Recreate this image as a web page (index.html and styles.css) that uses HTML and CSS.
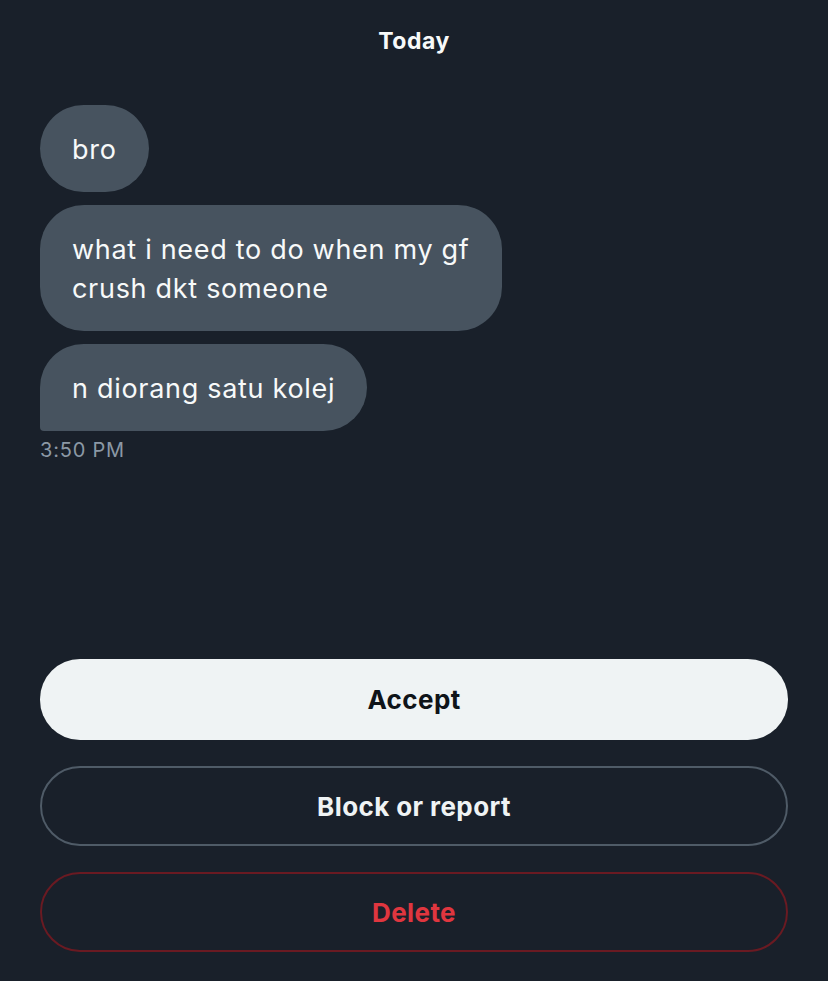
FILE: index.html
```html
<!DOCTYPE html>
<html lang="en">
<head>
<meta charset="utf-8">
<title>Message request</title>
<link rel="stylesheet" href="styles.css">
</head>
<body>
<main class="screen">
  <div class="day">Today</div>
  <section class="thread">
    <div class="bubble">bro</div>
    <div class="bubble">what i need to do when my gf<br>crush dkt someone</div>
    <div class="bubble last">n diorang satu kolej</div>
    <div class="time">3:50 PM</div>
  </section>
  <section class="actions">
    <button class="btn accept">Accept</button>
    <button class="btn block">Block or report</button>
    <button class="btn delete">Delete</button>
  </section>
</main>
</body>
</html>
```
FILE: styles.css
```css
* { box-sizing: border-box; }
html, body {
  margin: 0;
  padding: 0;
  background: #19202a;
  height: 100%;
}
body {
  font-family: Inter, Roboto, "Noto Sans", sans-serif;
  color: #f7f9f9;
}
.screen {
  height: 981px;
  display: flex;
  flex-direction: column;
  padding: 28px 40px 29px;
}
.day {
  text-align: center;
  font-size: 23px;
  font-weight: 700;
  line-height: 26px;
  letter-spacing: 0.5px;
}
.thread {
  margin-top: 51px;
  display: flex;
  flex-direction: column;
  align-items: flex-start;
  gap: 13px;
}
.bubble {
  background: #47535f;
  color: #f7f9f9;
  font-size: 27px;
  line-height: 39px;
  padding: 25px 32px 23px;
  border-radius: 44px;
  letter-spacing: 0.7px;
}
.bubble.last {
  border-bottom-left-radius: 4px;
}
.time {
  margin-top: -6px;
  font-size: 20px;
  line-height: 24px;
  letter-spacing: 0.8px;
  color: #8b98a5;
}
.actions {
  margin-top: auto;
  display: flex;
  flex-direction: column;
  gap: 26px;
}
.btn {
  width: 100%;
  height: 80px;
  border-radius: 40px;
  font-family: inherit;
  font-size: 26px;
  font-weight: 700;
  letter-spacing: 0.4px;
  background: transparent;
  cursor: pointer;
}
.accept {
  height: 81px;
  background: #eff3f4;
  color: #0f1419;
  border: none;
}
.block {
  border: 2px solid #4f5b67;
  color: #eff3f4;
}
.delete {
  border: 2px solid #6a1a22;
  color: #e0363f;
}
```
